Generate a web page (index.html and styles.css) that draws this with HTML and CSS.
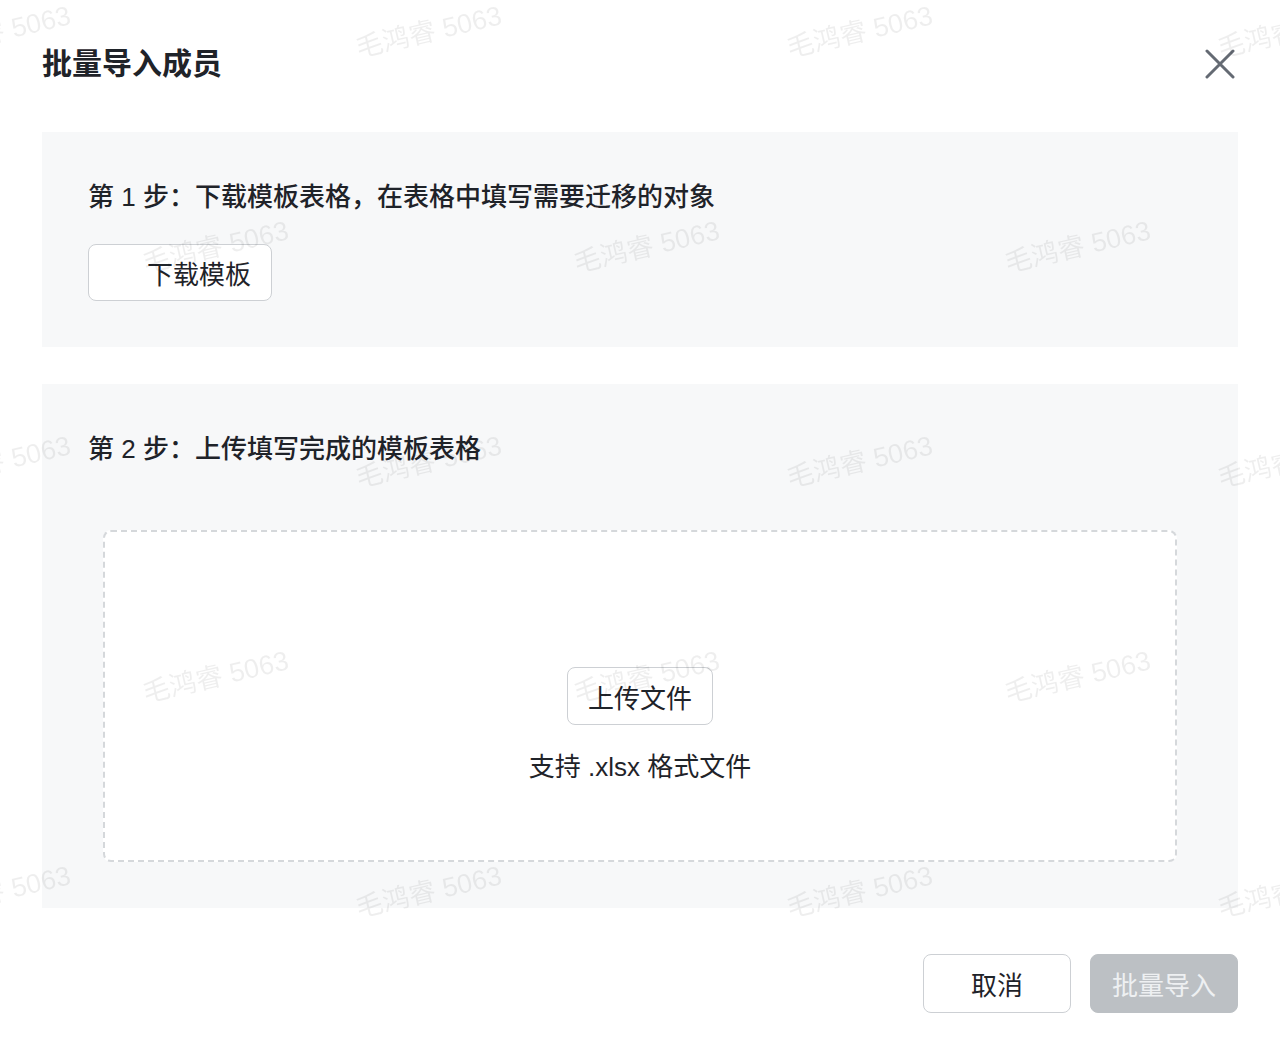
FILE: index.html
```html
<!DOCTYPE html>
<html lang="zh-CN">

<head>
    <meta http-equiv="Content-Type" content="text/html; charset=utf-8"/>
    <title>批量导入成员</title>
    <link rel="stylesheet" href="styles.css">
</head>

<body>

<div class="dialog">
    <div class="dialog-header">
        <h1 class="dialog-title">批量导入成员</h1>
        <button class="close-btn" type="button">
            <svg width="30" height="30" viewBox="0 0 30 30">
                <path d="M2 2 L28 28 M28 2 L2 28" stroke="#646a73" stroke-width="3" stroke-linecap="round" fill="none"/>
            </svg>
        </button>
    </div>

    <div class="step">
        <p class="step-title">第 1 步：下载模板表格，在表格中填写需要迁移的对象</p>
        <button class="btn btn-download" type="button">下载模板</button>
    </div>

    <div class="step step-upload">
        <p class="step-title">第 2 步：上传填写完成的模板表格</p>
        <div class="upload-area">
            <button class="btn btn-upload" type="button">上传文件</button>
            <p class="upload-tip">支持 .xlsx 格式文件</p>
        </div>
    </div>

    <div class="dialog-footer">
        <button class="btn btn-cancel" type="button">取消</button>
        <button class="btn btn-primary" type="button" disabled>批量导入</button>
    </div>
</div>

<!-- 水印 -->
<div class="watermark">
    <div class="wm-row wm-row-a">
        <div class="wm-cell"><span>毛鸿睿 5063</span></div>
        <div class="wm-cell"><span>毛鸿睿 5063</span></div>
        <div class="wm-cell"><span>毛鸿睿 5063</span></div>
        <div class="wm-cell"><span>毛鸿睿 5063</span></div>
    </div>
    <div class="wm-row">
        <div class="wm-cell"><span>毛鸿睿 5063</span></div>
        <div class="wm-cell"><span>毛鸿睿 5063</span></div>
        <div class="wm-cell"><span>毛鸿睿 5063</span></div>
    </div>
    <div class="wm-row wm-row-a">
        <div class="wm-cell"><span>毛鸿睿 5063</span></div>
        <div class="wm-cell"><span>毛鸿睿 5063</span></div>
        <div class="wm-cell"><span>毛鸿睿 5063</span></div>
        <div class="wm-cell"><span>毛鸿睿 5063</span></div>
    </div>
    <div class="wm-row">
        <div class="wm-cell"><span>毛鸿睿 5063</span></div>
        <div class="wm-cell"><span>毛鸿睿 5063</span></div>
        <div class="wm-cell"><span>毛鸿睿 5063</span></div>
    </div>
    <div class="wm-row wm-row-a">
        <div class="wm-cell"><span>毛鸿睿 5063</span></div>
        <div class="wm-cell"><span>毛鸿睿 5063</span></div>
        <div class="wm-cell"><span>毛鸿睿 5063</span></div>
        <div class="wm-cell"><span>毛鸿睿 5063</span></div>
    </div>
</div>

</body>

</html>
```

FILE: styles.css
```css
body {
    margin: 0;
    font-family: "Liberation Sans", "Noto Sans CJK SC", sans-serif;
    color: #1f2329;
    background: #fff;
}

.dialog {
    padding: 0 42px;
}

.dialog-header {
    display: flex;
    align-items: center;
    justify-content: space-between;
    height: 128px;
    padding-bottom: 4px;
}

.dialog-title {
    margin: 0;
    font-size: 30px;
    font-weight: 600;
    line-height: 40px;
}

.close-btn {
    display: flex;
    padding: 0;
    margin-right: 3px;
    border: none;
    background: none;
}

.step {
    padding: 46px;
    background-color: #f7f8f9;
}

.step-upload {
    margin-top: 37px;
}

.step-title {
    margin: 0;
    font-size: 26px;
    font-weight: 500;
    line-height: 39px;
}

.btn {
    font-family: inherit;
    font-size: 26px;
    color: #1f2329;
    background-color: #fff;
    border: 1.5px solid #cdd0d4;
    border-radius: 8px;
    padding: 0 20px;
}

.btn-download {
    display: block;
    height: 57px;
    margin-top: 27px;
    padding: 0 20px 0 58px;
}

.upload-area {
    box-sizing: border-box;
    height: 332px;
    margin: 61px 15px 0;
    padding-top: 135px;
    text-align: center;
    background-color: #fff;
    border: 2px dashed #d5d8db;
    border-radius: 8px;
}

.btn-upload {
    height: 58px;
}

.upload-tip {
    margin: 23px 0 0;
    font-size: 26px;
    line-height: 39px;
}

.dialog-footer {
    display: flex;
    justify-content: flex-end;
    gap: 19px;
    margin-top: 46px;
}

.btn-cancel, .btn-primary {
    min-width: 148px;
    height: 59px;
}

.btn-primary {
    color: #eef0f2;
    background-color: #bcc0c4;
    border-color: #bcc0c4;
}

.watermark {
    position: fixed;
    top: 0;
    left: 0;
    right: 0;
    bottom: 0;
    overflow: hidden;
    pointer-events: none;
}

.wm-row {
    display: flex;
    height: 215px;
    white-space: nowrap;
}

.wm-row:first-child {
    margin-top: -78px;
}

.wm-row-a {
    margin-left: -218px;
}

.wm-cell {
    flex: 0 0 431px;
    display: flex;
    align-items: center;
    justify-content: center;
}

.wm-cell span {
    font-size: 27px;
    color: rgba(0, 0, 0, 0.065);
    transform: rotate(-13deg);
}
```
